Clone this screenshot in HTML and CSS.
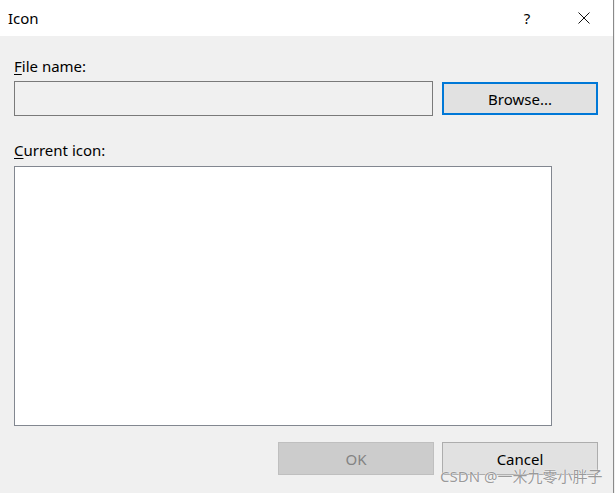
FILE: index.html
```html
<!DOCTYPE html>
<html>
<head>
<meta charset="utf-8">
<link rel="stylesheet" href="styles.css">
</head>
<body>
<div class="dialog">
  <div class="titlebar">
    <span class="title">Icon</span>
    <span class="help">?</span>
    <span class="close">
      <svg width="12" height="12" viewBox="0 0 12 12"><path d="M0.5 0.5 L11.5 11.5 M11.5 0.5 L0.5 11.5" stroke="#111" stroke-width="1" fill="none"/></svg>
    </span>
  </div>
  <div class="content">
    <div class="label label-file"><u>F</u>ile name:</div>
    <div class="file-row">
      <div class="input"></div>
      <div class="btn btn-browse">Browse...</div>
    </div>
    <div class="label label-icon"><u>C</u>urrent icon:</div>
    <div class="iconbox"></div>
    <div class="actions">
      <div class="btn btn-ok">OK</div>
      <div class="btn btn-cancel">Cancel</div>
    </div>
  </div>
  <div class="watermark">CSDN @一米九零小胖子</div>
</div>
</body>
</html>
```
FILE: styles.css
```css
html, body {
  margin: 0;
  padding: 0;
  background: #f0f0f0;
}
body {
  font-family: "Noto Sans", "Open Sans", "Noto Sans CJK SC", sans-serif;
  font-size: 15px;
  color: #000;
}
.dialog {
  position: relative;
  width: 614px;
  height: 493px;
  border-right: 1px solid #8a8a8a;
  background: #f0f0f0;
  box-sizing: border-box;
}
.titlebar {
  height: 36px;
  background: #fff;
  display: flex;
  align-items: center;
  padding-left: 8px;
}
.title {
  font-size: 15px;
  flex: 1;
}
.help {
  width: 20px;
  text-align: center;
  font-size: 15px;
  margin-right: 41px;
}
.close {
  display: flex;
  align-items: center;
  margin-right: 23px;
}
.content {
  padding: 0 15px 0 14px;
}
.label {
  line-height: 20px;
  height: 20px;
}
.label-file {
  margin-top: 20px;
}
.label u {
  text-decoration-thickness: 1px;
  text-underline-offset: 2px;
}
.file-row {
  display: flex;
  align-items: center;
  margin-top: 5px;
}
.input {
  width: 419px;
  height: 35px;
  box-sizing: border-box;
  border: 1px solid #7a7a7a;
  background: #f0f0f0;
}
.btn {
  width: 156px;
  height: 33px;
  box-sizing: border-box;
  display: flex;
  align-items: center;
  justify-content: center;
  background: #e1e1e1;
  border: 1px solid #adadad;
}
.btn-browse {
  margin-left: 9px;
  border: 2px solid #0078d7;
}
.label-icon {
  margin-top: 24px;
}
.iconbox {
  margin-top: 6px;
  width: 538px;
  height: 260px;
  box-sizing: border-box;
  border: 1px solid #828790;
  background: #fff;
}
.actions {
  display: flex;
  justify-content: flex-end;
  gap: 8px;
  margin-top: 16px;
}
.btn-ok {
  background: #cccccc;
  border-color: #bfbfbf;
  color: #838383;
}
.watermark {
  position: absolute;
  left: 440px;
  top: 465px;
  font-size: 15px;
  color: #9a9a9a;
  text-shadow: 0 0 1px #fff, 0 0 1px #fff;
  white-space: nowrap;
}
```
